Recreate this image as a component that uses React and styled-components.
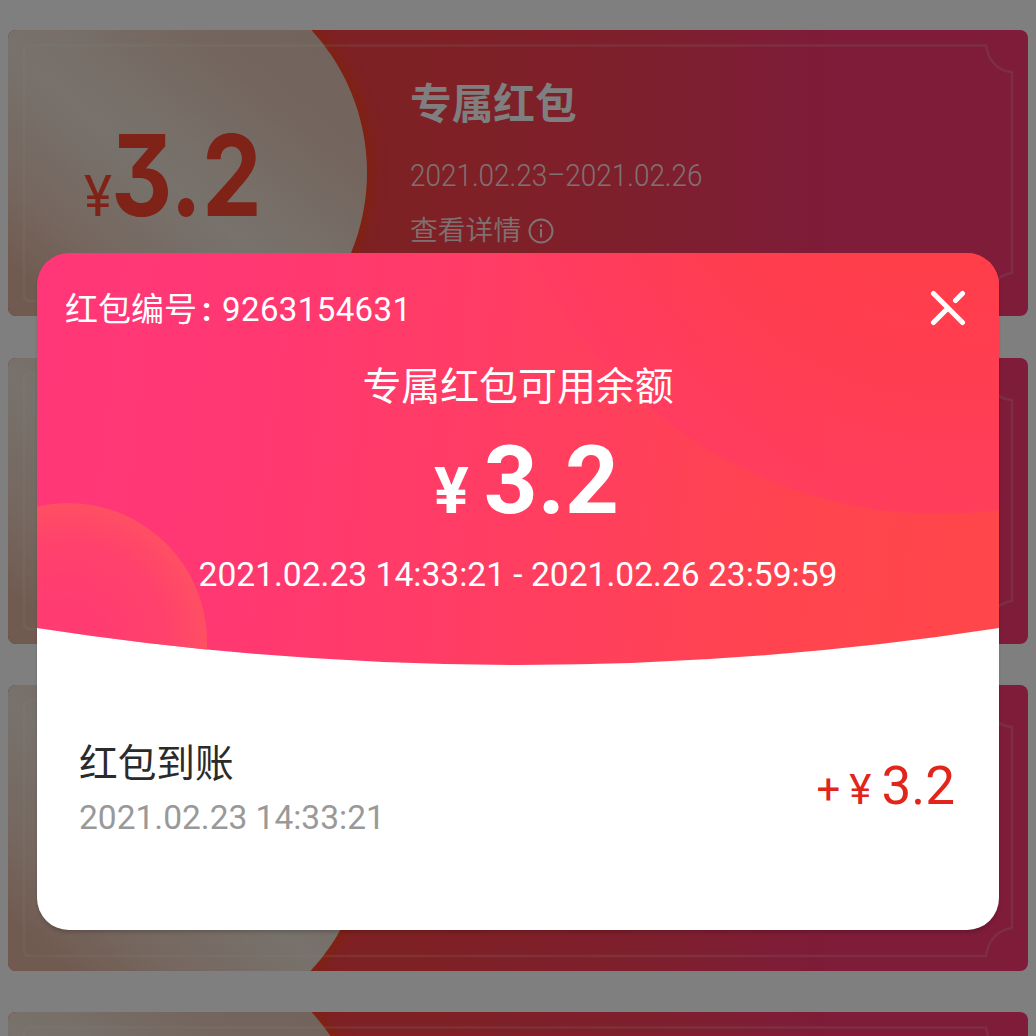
import React from 'react';
import styled, { createGlobalStyle } from 'styled-components';

const coupons = [
    { id: 1, title: '专属红包', value: '3.2', date: '2021.02.23–2021.02.26' },
    { id: 2 },
    { id: 3 },
    { id: 4 },
];

const records = [
    { id: 1, title: '红包到账', time: '2021.02.23 14:33:21', value: '3.2' },
];

const Coupon = ({ coupon }) => (
    <CouponCard>
        <CouponDisc />
        <CouponFrame viewBox="0 0 1020 286">
            <path d="M22 15.500H978C980 30 989 41 1004 42V243C989 245 980 256 978 271H22Q16 271 16 265V22Q16 15.500 22 15.500Z" />
        </CouponFrame>
        {coupon.title && (
            <>
                <CouponAmount>
                    <CouponYen>¥</CouponYen>
                    <CouponValue>{coupon.value}</CouponValue>
                </CouponAmount>
                <CouponInfo>
                    <CouponTitle>{coupon.title}</CouponTitle>
                    <CouponDate>{coupon.date}</CouponDate>
                    <CouponDetail>
                        查看详情
                        <InfoIcon viewBox="0 0 26 26">
                            <circle cx="13" cy="13" r="11.500" />
                            <path d="M13 11V19.500M13 6.500V9" />
                        </InfoIcon>
                    </CouponDetail>
                </CouponInfo>
            </>
        )}
    </CouponCard>
);

const HeaderArt = () => (
    <Art viewBox="0 0 962 413">
        <defs>
            <linearGradient id="base" x1="0" y1="0" x2="1" y2="0.05">
                <stop offset="0" stopColor="#ff3779" />
                <stop offset="0.24" stopColor="#ff3872" />
                <stop offset="0.55" stopColor="#ff3e60" />
                <stop offset="0.8" stopColor="#ff4450" />
                <stop offset="1" stopColor="#ff464a" />
            </linearGradient>
            <radialGradient id="big">
                <stop offset="0.45" stopColor="#ff3e4a" />
                <stop offset="0.75" stopColor="#ff3c54" stopOpacity="0.85" />
                <stop offset="1" stopColor="#ff3a64" stopOpacity="0.65" />
            </radialGradient>
            <radialGradient id="small">
                <stop offset="0.2" stopColor="#ff4568" stopOpacity="0.3" />
                <stop offset="0.7" stopColor="#ff4866" stopOpacity="0.6" />
                <stop offset="1" stopColor="#ff5063" />
            </radialGradient>
            <clipPath id="bowl">
                <path d="M-3 32A32 32 0 0 1 29 0H933A32 32 0 0 1 965 32V375L962 375Q481 449 0 375Z" />
            </clipPath>
        </defs>
        <g clipPath="url(#bowl)">
            <rect width="962" height="413" fill="url(#base)" />
            <circle cx="903" cy="-189" r="450" fill="url(#big)" />
            <circle cx="31" cy="389" r="139" fill="url(#small)" />
        </g>
    </Art>
);

const App = () => (
    <Page>
        <GlobalStyle />
        <CouponList>
            {coupons.map((coupon) => <Coupon key={coupon.id} coupon={coupon} />)}
        </CouponList>
        <Mask>
            <Modal>
                <Header>
                    <HeaderArt />
                    <TopBar>
                        <Serial>
                            红包编号<Colon>:</Colon><SerialNumber>9263154631</SerialNumber>
                        </Serial>
                        <CloseIcon viewBox="0 0 36 36">
                            <path d="M3.500 3.500L32.500 32.500M32.500 3.500L25.500 10.500M18 18L3.500 32.500" />
                        </CloseIcon>
                    </TopBar>
                    <Caption>专属红包可用余额</Caption>
                    <Balance>
                        <BalanceYen>¥</BalanceYen>
                        3.2
                    </Balance>
                    <Period>2021.02.23 14:33:21 - 2021.02.26 23:59:59</Period>
                </Header>
                <RecordList>
                    {records.map((record) => (
                        <Record key={record.id}>
                            <div>
                                <RecordTitle>{record.title}</RecordTitle>
                                <RecordTime>{record.time}</RecordTime>
                            </div>
                            <RecordAmount>
                                <RecordSign>+</RecordSign>
                                <RecordYen>¥</RecordYen>
                                {record.value}
                            </RecordAmount>
                        </Record>
                    ))}
                </RecordList>
            </Modal>
        </Mask>
    </Page>
);

export default App;

const GlobalStyle = createGlobalStyle`
    body {
        margin: 0;
        font-family: Roboto, "Noto Sans CJK SC", sans-serif;
    }
    * {
        box-sizing: border-box;
    }
`;

const Page = styled.div`
    position: relative;
    height: 1036px;
    overflow: hidden;
    background: #fff;
`;

const CouponList = styled.div`
    display: flex;
    flex-direction: column;
    gap: 41.350px;
    padding: 30.200px 8px;
`;

const CouponCard = styled.div`
    position: relative;
    display: flex;
    flex: none;
    height: 286px;
    border-radius: 8px;
    overflow: hidden;
    background: linear-gradient(90deg, #fc4248 0, #fc4248 40%, #fc4050 50%, #fc3e60 66%, #fc3874 82%, #fc3874 100%);
`;

const CouponDisc = styled.div`
    position: absolute;
    left: -62px;
    top: -68px;
    width: 421px;
    height: 421px;
    border-radius: 50%;
    box-shadow: 2px 0 12px 4px #ff4420;
    background: linear-gradient(40deg, #e2b6a2 22%, #ecd0c0 34%, #f0e4d8 50%, #eeded0 58%, #e8ccbc 72%, #e4c8b8 90%);
`;

const CouponFrame = styled.svg`
    position: absolute;
    left: 0;
    top: 0;
    width: 1020px;
    height: 286px;
    fill: none;
    stroke: rgba(255, 255, 255, 0.18);
    stroke-width: 2.5;
`;

const CouponAmount = styled.div`
    position: relative;
    display: flex;
    align-items: baseline;
    width: 402px;
    padding: 75px 0 0 75px;
    color: #ff4430;
`;

const CouponYen = styled.span`
    width: 28px;
    font-size: 57px;
    font-weight: 400;
    transform: scaleX(0.93);
`;

const CouponValue = styled.span`
    font-family: Inter, sans-serif;
    font-size: 113px;
    font-weight: 700;
    line-height: 140px;
    font-feature-settings: "cv09";
    transform: scaleX(0.84);
    transform-origin: left;
`;

const CouponInfo = styled.div`
    position: relative;
    padding-top: 45px;
    color: rgba(255, 255, 255, 0.86);
`;

const CouponTitle = styled.div`
    font-size: 41.700px;
    font-weight: 700;
    line-height: 60px;
    color: #fff;
`;

const CouponDate = styled.div`
    margin-top: 21px;
    font-size: 31px;
    font-weight: 300;
    line-height: 40px;
    transform: scaleX(0.9);
    transform-origin: left;
`;

const CouponDetail = styled.div`
    display: flex;
    align-items: center;
    gap: 7px;
    margin-top: 15px;
    font-size: 27.800px;
    font-weight: 350;
    line-height: 40px;
`;

const InfoIcon = styled.svg`
    width: 26px;
    height: 26px;
    fill: none;
    stroke: currentColor;
    stroke-width: 2;
`;

const Mask = styled.div`
    position: absolute;
    inset: 0;
    padding: 253px 37px 0;
    background: rgba(0, 0, 0, 0.5);
`;

const Modal = styled.div`
    height: 677px;
    border-radius: 32px;
    background: linear-gradient(transparent 340px, #fff 340px);
    box-shadow: 0 3px 4px -1px rgba(0, 0, 0, 0.2);
    overflow: hidden;
`;

const Header = styled.div`
    position: relative;
    display: flex;
    flex-direction: column;
    align-items: center;
    height: 413px;
    color: #fff;
`;

const Art = styled.svg`
    position: absolute;
    left: 0;
    top: 0;
    width: 962px;
    height: 413px;
`;

const TopBar = styled.div`
    position: relative;
    display: flex;
    align-items: center;
    justify-content: space-between;
    align-self: stretch;
    height: 50px;
    margin-top: 30px;
    padding: 0 33px 0 28px;
`;

const Serial = styled.div`
    display: flex;
    align-items: baseline;
    padding-top: 4px;
    font-size: 33px;
    line-height: 50px;
`;

const Colon = styled.span`
    width: 25px;
    padding-left: 5px;
    font-weight: 700;
`;

const SerialNumber = styled.span`
    letter-spacing: 0.400px;
`;

const CloseIcon = styled.svg`
    width: 36px;
    height: 36px;
    fill: none;
    stroke: #fff;
    stroke-width: 5;
    stroke-linecap: round;
`;

const Caption = styled.div`
    position: relative;
    margin-top: 24px;
    font-size: 38.900px;
    line-height: 60px;
`;

const Balance = styled.div`
    display: flex;
    align-items: baseline;
    position: relative;
    margin-top: 8px;
    padding-left: 17px;
    font-size: 94px;
    font-weight: 700;
    line-height: 112px;
`;

const BalanceYen = styled.span`
    margin-right: 15px;
    font-size: 65px;
`;

const Period = styled.div`
    position: relative;
    margin-top: 8px;
    font-size: 33.600px;
    line-height: 40px;
`;

const RecordList = styled.div`
    padding: 68px 44px 0 42px;
`;

const Record = styled.div`
    display: flex;
    align-items: center;
    justify-content: space-between;
`;

const RecordTitle = styled.div`
    font-size: 38.700px;
    line-height: 60px;
    color: #2b2b2b;
`;

const RecordTime = styled.div`
    margin-top: 4px;
    font-size: 33.500px;
    line-height: 40px;
    color: #999;
`;

const RecordAmount = styled.div`
    display: flex;
    align-items: baseline;
    padding-top: 3px;
    font-size: 53px;
    line-height: 64px;
    color: #e1251b;
`;

const RecordSign = styled.span`
    margin-right: 9px;
    font-size: 42px;
`;

const RecordYen = styled.span`
    margin-right: 10px;
    font-size: 42px;
`;
